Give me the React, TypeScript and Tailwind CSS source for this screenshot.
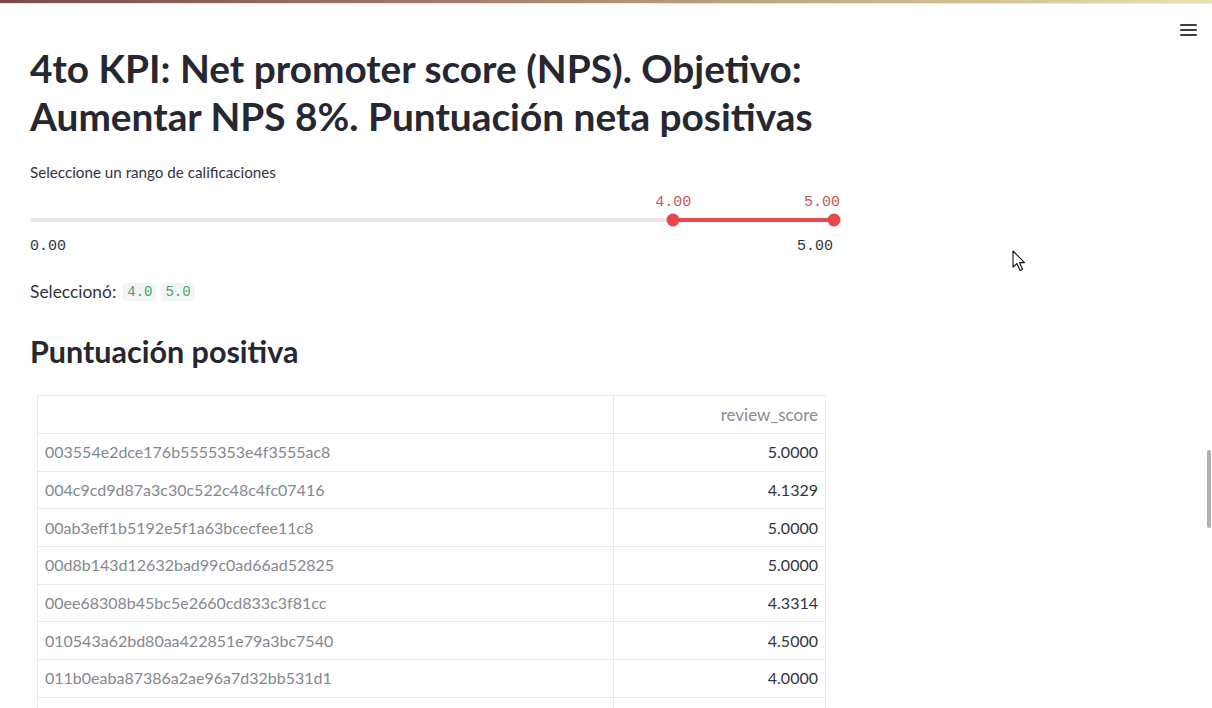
import React from "react";

const rows: [string, string][] = [
  ["003554e2dce176b5555353e4f3555ac8", "5.0000"],
  ["004c9cd9d87a3c30c522c48c4fc07416", "4.1329"],
  ["00ab3eff1b5192e5f1a63bcecfee11c8", "5.0000"],
  ["00d8b143d12632bad99c0ad66ad52825", "5.0000"],
  ["00ee68308b45bc5e2660cd833c3f81cc", "4.3314"],
  ["010543a62bd80aa422851e79a3bc7540", "4.5000"],
  ["011b0eaba87386a2ae96a7d32bb531d1", "4.0000"],
];

const sans = { fontFamily: "Lato, 'Noto Sans', sans-serif" };
const mono = { fontFamily: "'Liberation Mono', 'DejaVu Sans Mono', monospace" };

export default function App() {
  return (
    <div className="relative h-[708px] w-[1212px] overflow-hidden bg-white" style={sans}>
      {/* top decoration */}
      <div className="h-[3px] w-full bg-gradient-to-r from-[#7a4a4c] via-[#b08f74] to-[#e6e4ae]" />
      <div className="h-px w-full bg-[#f6e2da]" />

      {/* hamburger */}
      <div className="absolute right-[15px] top-[24px] flex w-[17px] flex-col gap-[3px]">
        <span className="h-[2px] w-full rounded bg-[#3a3b45]" />
        <span className="h-[2px] w-full rounded bg-[#3a3b45]" />
        <span className="h-[2px] w-full rounded bg-[#3a3b45]" />
      </div>

      {/* scrollbar thumb */}
      <div className="absolute right-[1px] top-[450px] h-[78px] w-[4px] rounded-full bg-[#b0b0b0]" />

      {/* mouse cursor */}
      <svg className="absolute left-[1012px] top-[250px]" width="16" height="24" viewBox="0 0 16 24">
        <path d="M1 1 L1 17 L5 13.5 L8 20.5 L10.5 19.5 L7.6 12.6 L12.5 12.6 Z" fill="#fff" stroke="#111" strokeWidth="1.1" strokeLinejoin="round" />
      </svg>

      <main className="ml-[30px] flex w-[804px] flex-col">
        <h1 className="mt-[40px] text-[38.8px] font-bold leading-[48px] text-[#262730]">
          4to KPI: Net promoter score (NPS). Objetivo:
          <br />
          Aumentar NPS 8%. Puntuación neta positivas
        </h1>

        <div className="mt-[22px] text-[15.2px] leading-[20px] text-[#31333f]">
          Seleccione un rango de calificaciones
        </div>

        {/* slider */}
        <div className="relative mt-[3px] h-[52px]">
          <div className="absolute left-0 right-0 top-[33px] h-[4px] rounded bg-[#e6e8ec]" />
          <div className="absolute left-[80%] right-0 top-[33px] h-[4px] bg-[#e8494d]" />
          <div className="absolute left-[80%] top-[35px] h-[13px] w-[13px] -translate-x-1/2 -translate-y-1/2 rounded-full bg-[#ea474b]" />
          <div className="absolute left-full top-[35px] h-[13px] w-[13px] -translate-x-1/2 -translate-y-1/2 rounded-full bg-[#ea474b]" />
          <div className="absolute left-[80%] top-[8px] -translate-x-1/2 text-[15px] leading-[20px] text-[#c4585a]" style={mono}>
            4.00
          </div>
          <div className="absolute right-[-6px] top-[8px] text-[15px] leading-[20px] text-[#c4585a]" style={mono}>
            5.00
          </div>
        </div>
        <div className="flex h-[20px] justify-between pr-px text-[15px] leading-[20px] text-[#31333f]" style={mono}>
          <span>0.00</span>
          <span>5.00</span>
        </div>

        <div className="mt-[23px] flex items-center gap-[5px] text-[17.4px] leading-[24px] text-[#31333f]">
          <span className="mr-[2px]">Seleccionó:</span>
          <code className="rounded-[3px] bg-[#f3f4f6] px-[4px] text-[14px] leading-[18px] text-[#45a862]" style={mono}>
            4.0
          </code>
          <code className="rounded-[3px] bg-[#f3f4f6] px-[4px] text-[14px] leading-[18px] text-[#45a862]" style={mono}>
            5.0
          </code>
        </div>

        <h3 className="mt-[27px] text-[30.5px] font-bold leading-[40px] text-[#262730]">Puntuación positiva</h3>

        <table className="ml-[7px] mt-[24px] w-[789px] border-collapse text-[16px]">
          <thead>
            <tr className="h-[38px]">
              <th className="w-[576px] border border-[#e8e9ec] px-[7px]" />
              <th className="border border-[#e8e9ec] px-[7px] text-right text-[17px] font-normal text-[#8a8c93]">review_score</th>
            </tr>
          </thead>
          <tbody>
            {rows.map(([id, score]) => (
              <tr key={id} className="h-[37.7px]">
                <td className="border border-[#e8e9ec] px-[7px] text-left text-[#85878e]">{id}</td>
                <td className="border border-[#e8e9ec] px-[7px] text-right text-[#31333f]">{score}</td>
              </tr>
            ))}
            <tr className="h-[37.7px]">
              <td className="border border-[#e8e9ec]" />
              <td className="border border-[#e8e9ec]" />
            </tr>
          </tbody>
        </table>
      </main>
    </div>
  );
}
